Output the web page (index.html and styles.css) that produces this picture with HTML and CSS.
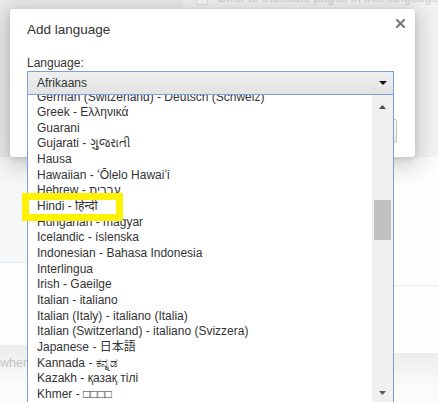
FILE: index.html
```html
<!DOCTYPE html>
<html>
<head>
<meta charset="utf-8">
<link rel="stylesheet" href="styles.css">
</head>
<body>
<div class="bg">
  <div class="bg-top">
    <div class="bg-top-left"></div>
    <div class="bg-top-right">
      <div class="offer"><span class="cb"></span><span class="offer-text">Offer to translate pages in this language</span></div>
    </div>
  </div>
  <div class="bg-bottom">
    <div class="bg-bl">
      <div class="pale"></div>
      <div class="wl"></div>
      <div class="band"><span class="band-text">when</span></div>
    </div>
    <div class="bg-br">
      <div class="wr1"></div>
      <div class="wr2"></div>
      <div class="band"></div>
    </div>
  </div>
</div>

<div class="dialog">
  <div class="dlg-head">
    <div class="title">Add language</div>
    <svg class="close" width="9" height="9" viewBox="0 0 9 9"><path d="M1 1L8 8M8 1L1 8" stroke="#777" stroke-width="2" stroke-linecap="square"/></svg>
  </div>
  <div class="label">Language:</div>
  <div class="select-wrap">
    <div class="select">
      <span class="sel-text">Afrikaans</span>
      <svg class="sel-arrow" width="8" height="4" viewBox="0 0 8 4"><polygon points="0,0 8,0 4,4" fill="#111"/></svg>
    </div>
    <div class="list">
      <div class="items">
        <div class="rows">
          <div class="row">German (Switzerland) - Deutsch (Schweiz)</div>
          <div class="row">Greek - Ελληνικά</div>
          <div class="row">Guarani</div>
          <div class="row">Gujarati - ગુજરાતી</div>
          <div class="row">Hausa</div>
          <div class="row">Hawaiian - ʻŌlelo Hawaiʻi</div>
          <div class="row">Hebrew - עברית</div>
          <div class="row">Hindi - हिन्दी</div>
          <div class="row">Hungarian - magyar</div>
          <div class="row">Icelandic - íslenska</div>
          <div class="row">Indonesian - Bahasa Indonesia</div>
          <div class="row">Interlingua</div>
          <div class="row">Irish - Gaeilge</div>
          <div class="row">Italian - italiano</div>
          <div class="row">Italian (Italy) - italiano (Italia)</div>
          <div class="row">Italian (Switzerland) - italiano (Svizzera)</div>
          <div class="row">Japanese - 日本語</div>
          <div class="row">Kannada - ಕನ್ನಡ</div>
          <div class="row">Kazakh - қазақ тілі</div>
          <div class="row">Khmer - □□□□</div>
        </div>
      </div>
      <div class="scrollbar">
        <div class="sb-btn"><svg width="7" height="4" viewBox="0 0 7 4"><polygon points="3.5,0 7,4 0,4" fill="#4a4a4a"/></svg></div>
        <div class="sb-track"><div class="sb-thumb"></div></div>
        <div class="sb-btn"><svg width="7" height="4" viewBox="0 0 7 4"><polygon points="0,0 7,0 3.5,4" fill="#5a5a5a"/></svg></div>
      </div>
    </div>
  </div>
  <div class="footer"><div class="btn"></div></div>
</div>

<div class="highlight"></div>
</body>
</html>
```
FILE: styles.css
```css
body {
  margin: 0;
  width: 438px;
  height: 402px;
  overflow: hidden;
  position: relative;
  font-family: "Liberation Sans", Arial, "DejaVu Sans", "Noto Sans", "Noto Sans CJK JP", sans-serif;
  color: #303030;
}

.bg {
  display: flex;
  flex-direction: column;
  height: 402px;
}
.bg-top {
  display: flex;
  height: 157px;
}
.bg-top-left {
  width: 183px;
  background: #ececec;
}
.bg-top-right {
  flex: 1;
  background: #f4f4f4;
  padding-left: 13px;
  overflow: hidden;
}
.offer {
  display: flex;
  align-items: center;
  gap: 9px;
  margin-top: -9px;
  height: 15px;
}
.cb {
  flex: none;
  width: 10px;
  height: 10px;
  border: 1px solid #dcdcdc;
  border-radius: 1px;
  background: #f9f9f9;
}
.offer-text {
  font-size: 12.5px;
  line-height: 15px;
  color: #d0d0d0;
  white-space: nowrap;
}

.bg-bottom {
  display: flex;
  flex: 1;
}
.bg-bl {
  width: 200px;
  display: flex;
  flex-direction: column;
}
.pale {
  height: 105px;
  background: #f6f7f9;
  border-bottom: 1px solid #e6e7e9;
}
.wl {
  height: 82px;
  background: #fdfdfd;
}
.band {
  flex: 1;
  background: linear-gradient(#ececec, #fbfbfb 70%);
}
.band-text {
  display: block;
  padding-top: 11px;
  font-size: 12.5px;
  line-height: 15px;
  color: #c4c4c4;
}
.bg-br {
  flex: 1;
  display: flex;
  flex-direction: column;
}
.wr1 {
  height: 128px;
  background: #fdfdfd;
  border-bottom: 1px solid #ececec;
}
.wr2 {
  height: 67px;
  background: #fdfdfd;
}

.dialog {
  position: absolute;
  left: 10px;
  top: 9px;
  width: 405px;
  height: 148px;
  box-sizing: border-box;
  padding: 13px 10px 0 17px;
  background: #fff;
  border-radius: 3px;
  box-shadow: 0 4px 23px 5px rgba(0, 0, 0, 0.18), 0 2px 6px rgba(0, 0, 0, 0.12);
}
.dlg-head {
  display: flex;
  justify-content: space-between;
  align-items: flex-start;
}
.title {
  font-size: 13.5px;
  line-height: 16px;
  color: #333;
}
.close {
  margin-top: -3px;
  display: block;
}
.label {
  margin-top: 18px;
  font-size: 12px;
  line-height: 15px;
  color: #333;
}
.select-wrap {
  position: relative;
  margin-right: 11px;
  z-index: 2;
}
.select {
  height: 24px;
  box-sizing: border-box;
  border: 1px solid #7d9fe0;
  background: linear-gradient(#efefef, #e3e3e3);
  display: flex;
  align-items: center;
  justify-content: space-between;
  padding: 0 6px 0 9px;
}
.sel-text {
  font-size: 12px;
  line-height: 22px;
  color: #333;
}
.sel-arrow {
  display: block;
}
.list {
  position: absolute;
  left: 0;
  top: 100%;
  width: 100%;
  height: 309px;
  box-sizing: border-box;
  border-left: 1px solid #7d9fe0;
  border-right: 1px solid #7d9fe0;
  background: #fff;
  display: flex;
  overflow: hidden;
}
.items {
  flex: 1;
  overflow: hidden;
}
.rows {
  margin-top: -5.5px;
}
.row {
  height: 15.67px;
  line-height: 15.67px;
  padding-left: 9px;
  font-size: 12px;
  color: #333;
  white-space: nowrap;
}
.scrollbar {
  width: 21px;
  flex: none;
  background: #f0f0f0;
  display: flex;
  flex-direction: column;
}
.sb-btn {
  height: 23px;
  display: flex;
  align-items: center;
  justify-content: center;
}
.sb-btn svg {
  display: block;
}
.sb-track {
  flex: 1;
}
.sb-thumb {
  margin: 82px 2px 0 2px;
  height: 40px;
  background: #c1c1c1;
}
.footer {
  display: flex;
  justify-content: flex-end;
  margin-top: 24px;
  margin-right: 8px;
}
.btn {
  width: 60px;
  height: 24px;
  box-sizing: border-box;
  border: 1px solid #c4c4c4;
  border-radius: 2px;
  background: linear-gradient(#fafafa, #ececec);
}

.highlight {
  position: absolute;
  left: 22px;
  top: 193px;
  width: 101px;
  height: 28px;
  box-sizing: border-box;
  border: 7px solid #fff200;
  z-index: 5;
}
```
